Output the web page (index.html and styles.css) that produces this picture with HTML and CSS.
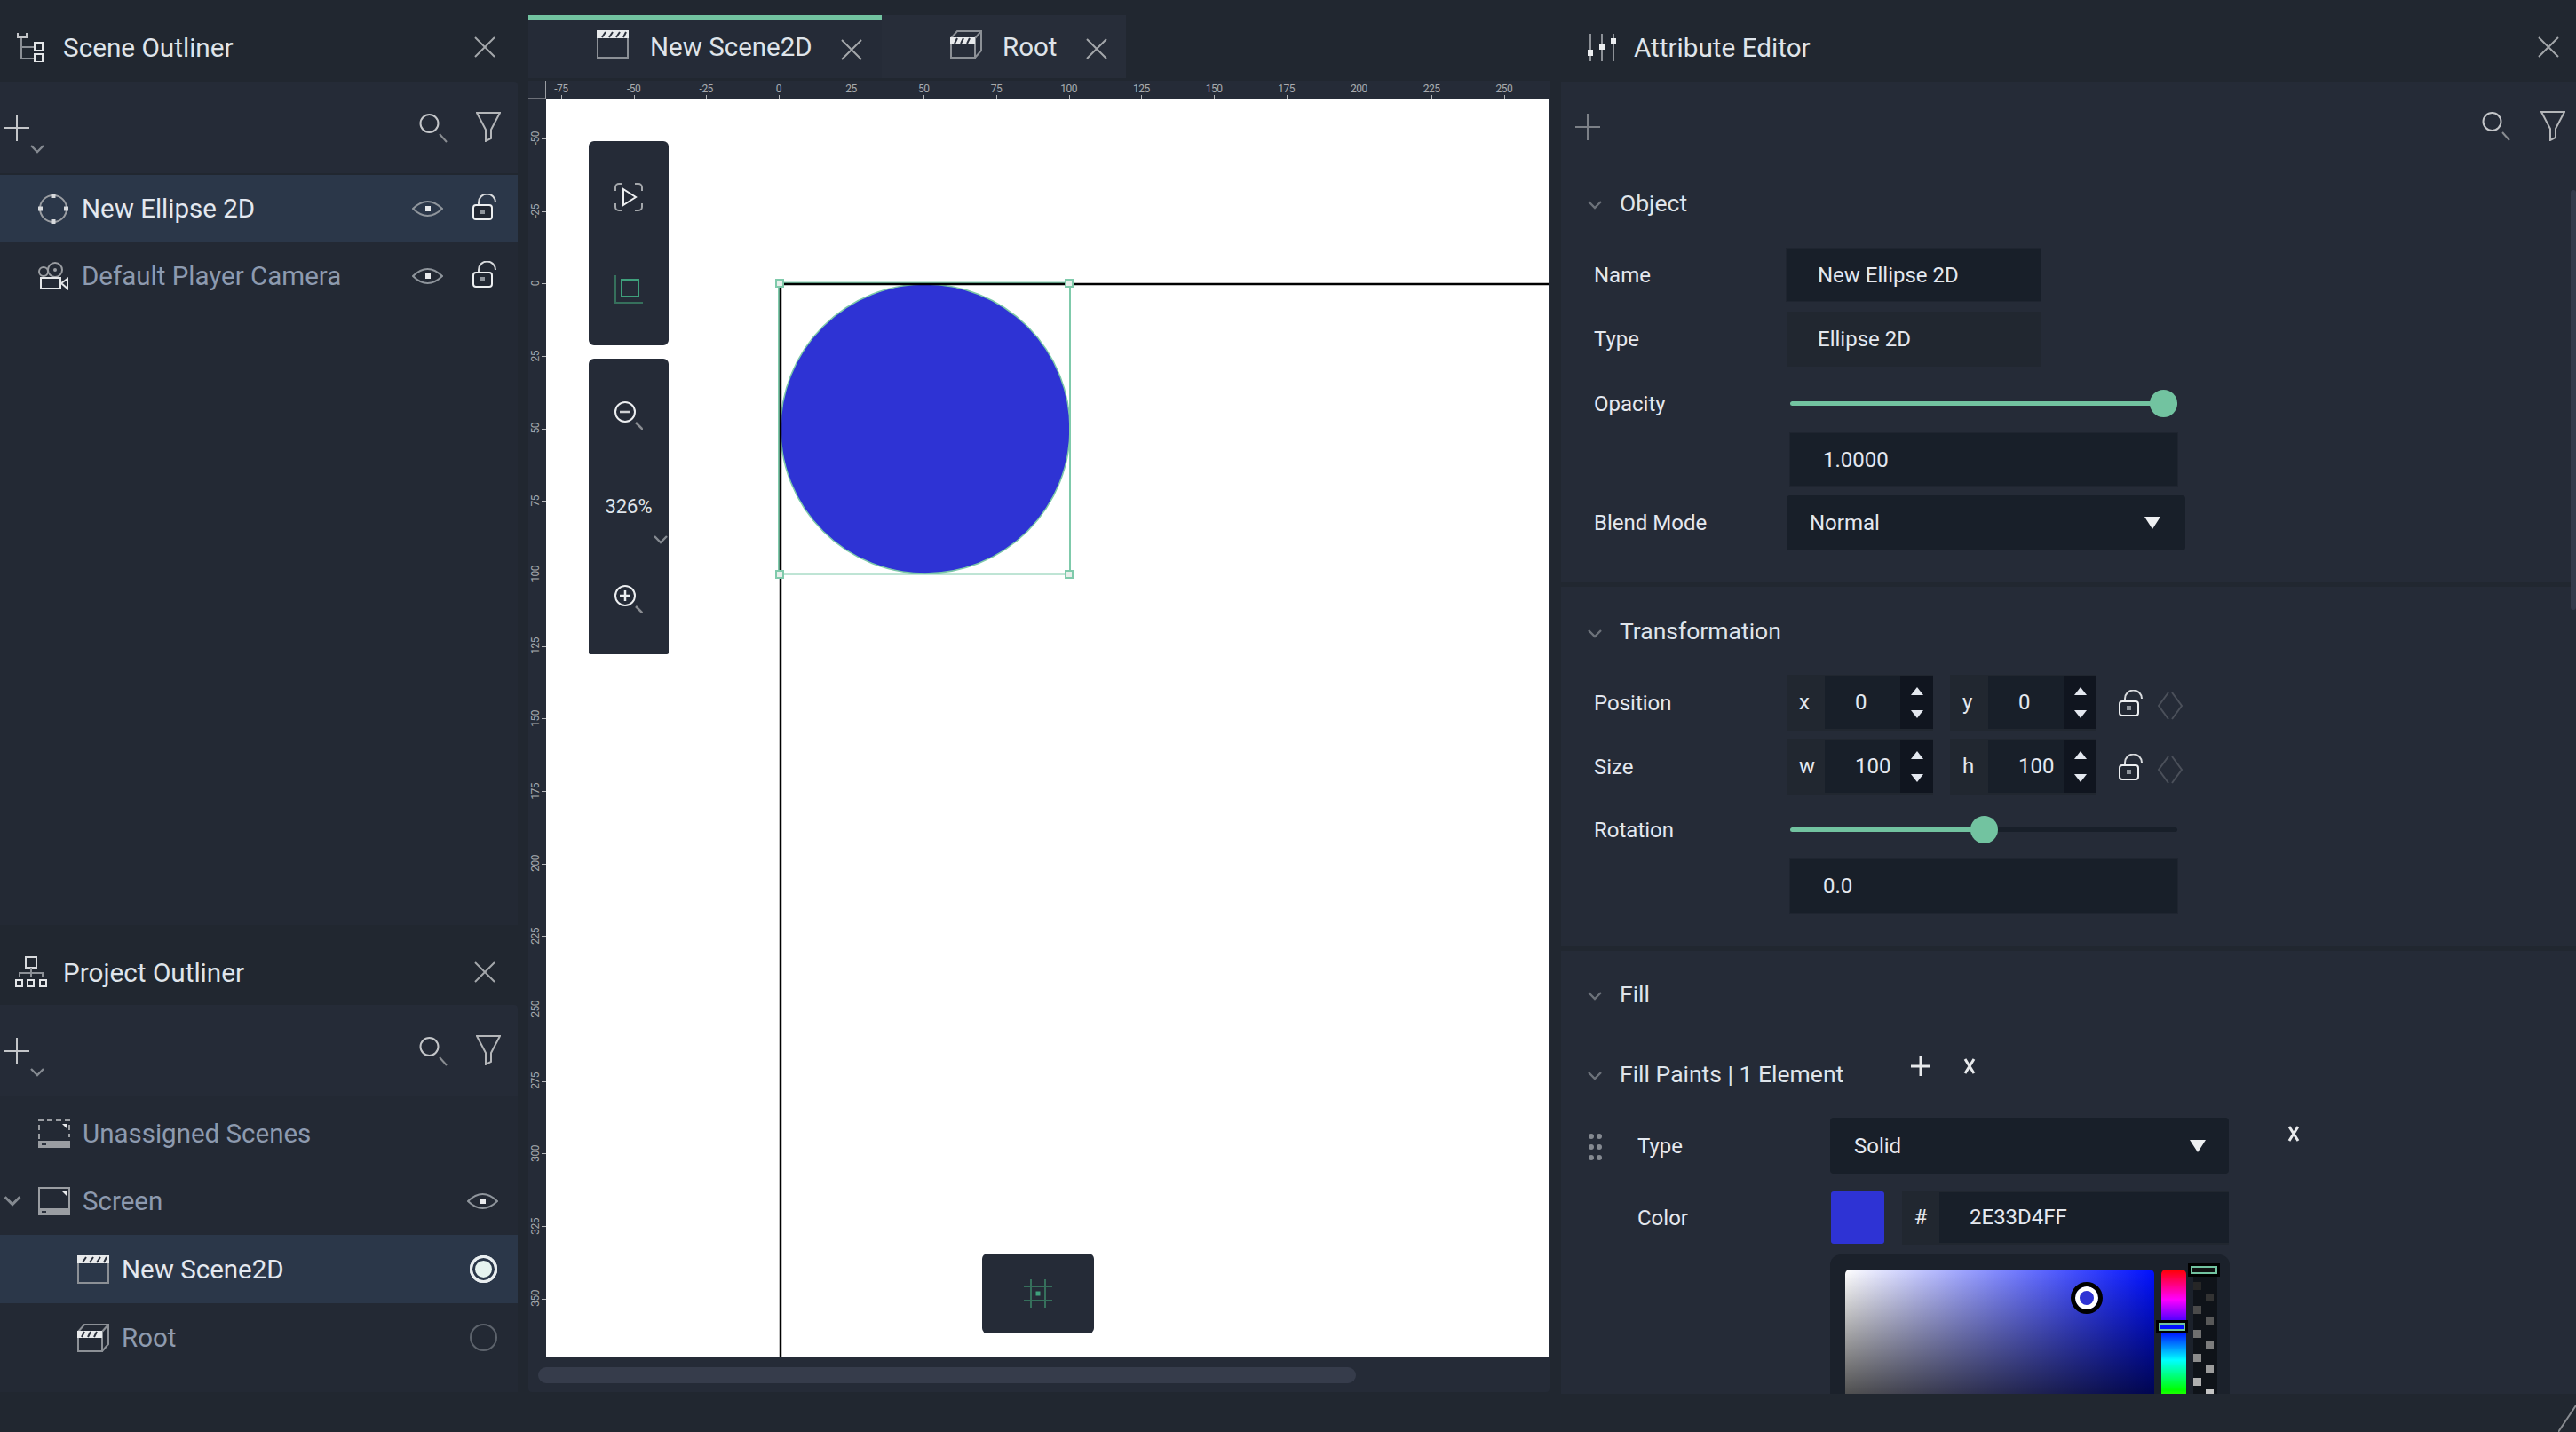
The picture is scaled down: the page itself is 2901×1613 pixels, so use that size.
FILE: index.html
```html
<!DOCTYPE html>
<html lang="en">
<head>
  <meta charset="UTF-8" />
  <title>Scene Editor</title>
  <link rel="stylesheet" href="styles.css">
</head>
<body>

  <svg class="defs" width="0" height="0">
    <symbol id="i-close" viewBox="0 0 24 24"><path d="M1 1L23 23M23 1L1 23" stroke="#a4a7ab" stroke-width="2" fill="none"/></symbol>
    <symbol id="i-plus" viewBox="0 0 28 30"><path d="M14 0V30M0 15H28" stroke="#c4c6c9" stroke-width="2" fill="none"/></symbol>
    <symbol id="i-chev" viewBox="0 0 16 10"><path d="M1 1L8 8L15 1" stroke="#858a91" stroke-width="2.4" fill="none"/></symbol>
    <symbol id="i-search" viewBox="0 0 32 34"><circle cx="11.5" cy="12" r="10" stroke="#c4c6c9" stroke-width="2" fill="none"/><path d="M23 24L31 33" stroke="#8a8d92" stroke-width="2" fill="none"/></symbol>
    <symbol id="i-filter" viewBox="0 0 28 34"><path d="M1 1H27L17 20V30L11 33V20Z" stroke="#b4b6b9" stroke-width="2" fill="none"/></symbol>
    <symbol id="i-eye" viewBox="0 0 35 20"><path d="M1 10Q17.500 -6 34 10Q17.500 26 1 10Z" stroke="#8f959c" stroke-width="2" fill="none"/><rect x="15" y="7" width="6" height="6" fill="#e8eaec"/></symbol>
    <symbol id="i-lock" viewBox="0 0 28 30"><path d="M7 13V10a9.500 9.500 0 0 1 19 0" stroke="#d8dadd" stroke-width="2" fill="none"/><rect x="1" y="13" width="21" height="16" rx="3" stroke="#eceef0" stroke-width="2" fill="#212732"/><rect x="9" y="18" width="5" height="5" fill="#8f959c"/></symbol>
    <symbol id="i-diamond" viewBox="0 0 30 34"><path d="M13 2L2 17L13 32M17 2L28 17L17 32" stroke="#4b505a" stroke-width="2" fill="none"/></symbol>
    <symbol id="i-scene" viewBox="0 0 36 32"><rect x="1" y="1" width="34" height="30" stroke="#8c9096" stroke-width="2" fill="none"/><rect width="36" height="9" fill="#e8eaec"/><path d="M6 8L10 2M14 8L18 2M22 8L26 2M30 8L33 2" stroke="#2a303c" stroke-width="2"/></symbol>
    <symbol id="i-root" viewBox="0 0 36 32"><path d="M1 9L8 1H35V23L28 31" stroke="#8c9096" stroke-width="2" fill="none"/><path d="M28 9L35 1" stroke="#8c9096" stroke-width="2"/><rect x="1" y="9" width="27" height="22" stroke="#8c9096" stroke-width="2" fill="none"/><rect y="8" width="28" height="8" fill="#e8eaec"/><path d="M5 15L8 9M12 15L15 9M19 15L22 9" stroke="#2a303c" stroke-width="2"/></symbol>
    <symbol id="i-screen" viewBox="0 0 36 32"><rect x="1" y="1" width="34" height="30" stroke="#9a9da2" stroke-width="2" fill="none"/><rect y="24" width="36" height="8" fill="#9a9da2"/><rect x="4" y="27" width="5" height="2" fill="#2a303c"/><path d="M27 5H32V10Z" fill="#e8eaec"/></symbol>
    <symbol id="i-unassigned" viewBox="0 0 36 32"><path d="M1 12V1H35V12M1 16V31H35V16" stroke="#9a9da2" stroke-width="2" stroke-dasharray="6 4" fill="none"/><rect y="24" width="36" height="8" fill="#9a9da2"/><rect x="4" y="27" width="5" height="2" fill="#2a303c"/><path d="M27 5H32V10Z" fill="#e8eaec"/></symbol>
    <symbol id="i-x" viewBox="0 0 14 18"><path d="M2 1L12 17M12 1L2 17" stroke="#e8eaec" stroke-width="3" fill="none"/></symbol>
    <symbol id="i-tree" viewBox="0 0 30 33"><path d="M1 0V5H11V0" stroke="#c4c6c9" stroke-width="2" fill="none"/><path d="M5 6V29H19M5 16H19" stroke="#8c9096" stroke-width="2" fill="none"/><rect x="20" y="11" width="9" height="9" stroke="#e4e6e8" stroke-width="2" fill="none"/><rect x="20" y="24" width="9" height="9" stroke="#e4e6e8" stroke-width="2" fill="none"/></symbol>
  </svg>

  <div class="app">

    <aside class="left">
      <section class="panel scene-panel">
        <header class="panel-head">
          <svg class="head-icon" width="30" height="33"><use href="#i-tree"/></svg>
          <span class="panel-title">Scene Outliner</span>
          <svg class="close" width="24" height="24"><use href="#i-close"/></svg>
        </header>
        <div class="toolbar">
          <span class="add">
            <svg width="28" height="30"><use href="#i-plus"/></svg>
            <svg class="add-chev" width="16" height="10"><use href="#i-chev"/></svg>
          </span>
          <svg class="tool-search" width="32" height="34"><use href="#i-search"/></svg>
          <svg class="tool-filter" width="28" height="34"><use href="#i-filter"/></svg>
        </div>
        <ul class="tree">
          <li class="row selected">
            <svg class="row-icon" width="34" height="34" viewBox="0 0 34 34"><circle cx="17" cy="17" r="15" stroke="#9a9da2" stroke-width="2" fill="none"/><rect x="14.500" y="0" width="5" height="5" fill="#d8dadd"/><rect x="14.500" y="29" width="5" height="5" fill="#d8dadd"/><rect x="0" y="14.500" width="5" height="5" fill="#d8dadd"/><rect x="29" y="14.500" width="5" height="5" fill="#d8dadd"/></svg>
            <span class="row-name">New Ellipse 2D</span>
            <svg class="row-eye" width="35" height="20"><use href="#i-eye"/></svg>
            <svg class="row-lock" width="28" height="30"><use href="#i-lock"/></svg>
          </li>
          <li class="row">
            <svg class="row-icon" width="34" height="32" viewBox="0 0 34 32"><circle cx="6" cy="11" r="5" stroke="#9a9da2" stroke-width="2" fill="none"/><circle cx="19" cy="9" r="8" stroke="#9a9da2" stroke-width="2" fill="none"/><circle cx="19" cy="9" r="2" fill="#9a9da2"/><rect x="3" y="18" width="22" height="12" stroke="#e4e6e8" stroke-width="2" fill="none"/><path d="M26 24L33 19V30Z" stroke="#e4e6e8" stroke-width="2" fill="none"/></svg>
            <span class="row-name">Default Player Camera</span>
            <svg class="row-eye" width="35" height="20"><use href="#i-eye"/></svg>
            <svg class="row-lock" width="28" height="30"><use href="#i-lock"/></svg>
          </li>
        </ul>
      </section>

      <section class="panel project-panel">
        <header class="panel-head project-head">
          <svg class="head-icon" width="36" height="36" viewBox="0 0 36 36"><rect x="12" y="1" width="12" height="12" stroke="#d8dadd" stroke-width="2" fill="none"/><path d="M18 13V24M5 24V19H31V24" stroke="#8c9096" stroke-width="2" fill="none"/><rect x="1" y="27" width="7" height="7" stroke="#e4e6e8" stroke-width="2" fill="none"/><rect x="14" y="27" width="7" height="7" stroke="#e4e6e8" stroke-width="2" fill="none"/><rect x="28" y="27" width="7" height="7" stroke="#e4e6e8" stroke-width="2" fill="none"/></svg>
          <span class="panel-title">Project Outliner</span>
          <svg class="close" width="24" height="24"><use href="#i-close"/></svg>
        </header>
        <div class="toolbar">
          <span class="add">
            <svg width="28" height="30"><use href="#i-plus"/></svg>
            <svg class="add-chev" width="16" height="10"><use href="#i-chev"/></svg>
          </span>
          <svg class="tool-search" width="32" height="34"><use href="#i-search"/></svg>
          <svg class="tool-filter" width="28" height="34"><use href="#i-filter"/></svg>
        </div>
        <ul class="tree project-tree">
          <li class="row">
            <svg class="row-icon" width="36" height="32"><use href="#i-unassigned"/></svg>
            <span class="row-name">Unassigned Scenes</span>
          </li>
          <li class="row">
            <svg class="row-chev" width="20" height="12"><use href="#i-chev"/></svg>
            <svg class="row-icon" width="36" height="32"><use href="#i-screen"/></svg>
            <span class="row-name">Screen</span>
            <svg class="row-eye end" width="35" height="20"><use href="#i-eye"/></svg>
          </li>
          <li class="row selected child">
            <svg class="row-icon" width="36" height="32"><use href="#i-scene"/></svg>
            <span class="row-name">New Scene2D</span>
            <span class="radio on"></span>
          </li>
          <li class="row child">
            <svg class="row-icon" width="36" height="32"><use href="#i-root"/></svg>
            <span class="row-name">Root</span>
            <span class="radio"></span>
          </li>
        </ul>
      </section>
    </aside>

    <main class="center">
      <nav class="tabs">
        <div class="tab active">
          <svg class="tab-icon" width="36" height="32"><use href="#i-scene"/></svg>
          <span class="tab-name">New Scene2D</span>
          <svg class="tab-close" width="24" height="24"><use href="#i-close"/></svg>
        </div>
        <div class="tab second">
          <svg class="tab-icon" width="36" height="32"><use href="#i-root"/></svg>
          <span class="tab-name">Root</span>
          <svg class="tab-close" width="24" height="24"><use href="#i-close"/></svg>
        </div>
      </nav>

      <div class="view">
        <div class="ruler-top">
          <div class="ruler-corner"></div>
          <div class="ticks-h">
            <span>-75</span><span>-50</span><span>-25</span><span>0</span><span>25</span><span>50</span><span>75</span><span>100</span><span>125</span><span>150</span><span>175</span><span>200</span><span>225</span><span>250</span>
          </div>
        </div>
        <div class="view-body">
          <div class="ticks-v">
            <span><b>-50</b></span><span><b>-25</b></span><span><b>0</b></span><span><b>25</b></span><span><b>50</b></span><span><b>75</b></span><span><b>100</b></span><span><b>125</b></span><span><b>150</b></span><span><b>175</b></span><span><b>200</b></span><span><b>225</b></span><span><b>250</b></span><span><b>275</b></span><span><b>300</b></span><span><b>325</b></span><span><b>350</b></span>
          </div>
          <div class="canvas">
            <svg class="stage" width="1129" height="1417" viewBox="0 0 1129 1417">
              <circle cx="427" cy="371" r="163" fill="#2e33d4" stroke="#7cc8a8" stroke-width="1.500"/>
              <rect x="262" y="206.500" width="328" height="328" fill="none" stroke="#7fcaab" stroke-width="2"/>
              <path d="M264 1417V208H1129" stroke="#000" stroke-width="2.500" fill="none"/>
              <rect x="259" y="203" width="8" height="8" fill="#e8efeb" stroke="#7fcaab" stroke-width="2"/>
              <rect x="585" y="203" width="8" height="8" fill="#e8efeb" stroke="#7fcaab" stroke-width="2"/>
              <rect x="259" y="531" width="8" height="8" fill="#e8efeb" stroke="#7fcaab" stroke-width="2"/>
              <rect x="585" y="531" width="8" height="8" fill="#e8efeb" stroke="#7fcaab" stroke-width="2"/>
            </svg>

            <div class="float-bar view-tools">
              <svg width="32" height="32" viewBox="0 0 32 32"><path d="M1 9V5a4 4 0 0 1 4-4H9M23 1H27a4 4 0 0 1 4 4V9M31 23V27a4 4 0 0 1-4 4H23M9 31H5a4 4 0 0 1-4-4V23" stroke="#a4a7ab" stroke-width="2" fill="none"/><path d="M10 7L24 16L10 25Z" stroke="#eceef0" stroke-width="2" fill="none"/></svg>
              <svg width="32" height="32" viewBox="0 0 32 32"><path d="M1 0V31H32" stroke="#36705c" stroke-width="2" fill="none"/><rect x="8" y="5" width="19" height="19" stroke="#3fa07c" stroke-width="2" fill="none"/></svg>
            </div>

            <div class="float-bar zoom-tools">
              <svg width="32" height="32" viewBox="0 0 32 32"><circle cx="12" cy="12" r="11" stroke="#eceef0" stroke-width="2" fill="none"/><path d="M6 12H18" stroke="#d0d2d5" stroke-width="2.500"/><path d="M24 24L32 32" stroke="#8a8d92" stroke-width="2.500"/></svg>
              <span class="zoom-value">326%</span>
              <svg class="zoom-in" width="32" height="32" viewBox="0 0 32 32"><circle cx="12" cy="12" r="11" stroke="#eceef0" stroke-width="2" fill="none"/><path d="M6 12H18M12 6V18" stroke="#eceef0" stroke-width="2.500"/><path d="M24 24L32 32" stroke="#8a8d92" stroke-width="2.500"/></svg>
              <svg class="zoom-chev" width="16" height="10"><use href="#i-chev"/></svg>
            </div>

            <div class="float-bar grid-tool">
              <svg width="32" height="32" viewBox="0 0 32 32"><path d="M8 0V32M24 0V32M0 8H32M0 24H32" stroke="#36705c" stroke-width="2" fill="none"/><rect x="13.500" y="13.500" width="5" height="5" fill="#3fa07c"/></svg>
            </div>
          </div>
        </div>
        <div class="h-scroll"><div class="h-thumb"></div></div>
      </div>
    </main>

    <aside class="right">
      <header class="panel-head attr-head">
        <svg class="head-icon" width="32" height="31" viewBox="0 0 32 31"><path d="M3 0V31M16 0V31M29 0V31" stroke="#8c9096" stroke-width="2" fill="none"/><rect x="0" y="18" width="6" height="7" fill="#eceef0"/><rect x="13" y="12" width="6" height="6" fill="#eceef0"/><rect x="26" y="5" width="6" height="7" fill="#eceef0"/></svg>
        <span class="panel-title">Attribute Editor</span>
        <svg class="close" width="24" height="24"><use href="#i-close"/></svg>
      </header>
      <div class="toolbar attr-toolbar">
        <span class="add dim"><svg width="28" height="30"><use href="#i-plus"/></svg></span>
        <svg class="tool-search" width="32" height="34"><use href="#i-search"/></svg>
        <svg class="tool-filter" width="28" height="34"><use href="#i-filter"/></svg>
      </div>

      <div class="attrs">
        <div class="v-thumb"></div>

        <section class="group object-group">
          <h3 class="group-title"><svg class="group-chev" width="16" height="10"><use href="#i-chev"/></svg>Object</h3>
          <div class="attr name-row">
            <label>Name</label>
            <div class="value strong">New Ellipse 2D</div>
          </div>
          <div class="attr type-row">
            <label>Type</label>
            <div class="value plain">Ellipse 2D</div>
          </div>
          <div class="attr slider-row">
            <label>Opacity</label>
            <div class="slider"><div class="slider-fill full"></div><div class="knob"></div></div>
          </div>
          <div class="attr wide-row">
            <label></label>
            <div class="value wide">1.0000</div>
          </div>
          <div class="attr blend-row">
            <label>Blend Mode</label>
            <div class="select blend">Normal<i class="caret"></i></div>
          </div>
        </section>

        <section class="group transform-group">
          <h3 class="group-title"><svg class="group-chev" width="16" height="10"><use href="#i-chev"/></svg>Transformation</h3>
          <div class="attr pair-row">
            <label>Position</label>
            <div class="num"><span class="axis">x</span><span class="num-val">0</span><span class="step"><i class="up"></i><i class="down"></i></span></div>
            <div class="num"><span class="axis">y</span><span class="num-val">0</span><span class="step"><i class="up"></i><i class="down"></i></span></div>
            <svg class="pair-lock" width="28" height="30"><use href="#i-lock"/></svg>
            <svg class="pair-key" width="30" height="34"><use href="#i-diamond"/></svg>
          </div>
          <div class="attr pair-row size-row">
            <label>Size</label>
            <div class="num"><span class="axis">w</span><span class="num-val">100</span><span class="step"><i class="up"></i><i class="down"></i></span></div>
            <div class="num"><span class="axis">h</span><span class="num-val">100</span><span class="step"><i class="up"></i><i class="down"></i></span></div>
            <svg class="pair-lock" width="28" height="30"><use href="#i-lock"/></svg>
            <svg class="pair-key" width="30" height="34"><use href="#i-diamond"/></svg>
          </div>
          <div class="attr slider-row rotation-row">
            <label>Rotation</label>
            <div class="slider"><div class="slider-fill half"></div><div class="knob"></div></div>
          </div>
          <div class="attr wide-row rotation-input">
            <label></label>
            <div class="value wide">0.0</div>
          </div>
        </section>

        <section class="group fill-group">
          <h3 class="group-title"><svg class="group-chev" width="16" height="10"><use href="#i-chev"/></svg>Fill</h3>
          <h3 class="group-title paints-title">
            <svg class="group-chev" width="16" height="10"><use href="#i-chev"/></svg>Fill Paints | 1 Element
            <svg class="paint-add" width="22" height="22" viewBox="0 0 22 22"><path d="M11 0V22M0 11H22" stroke="#e8eaec" stroke-width="3"/></svg>
            <svg class="paint-del" width="14" height="18"><use href="#i-x"/></svg>
          </h3>
          <div class="paint-row">
            <span class="grip"><i></i><i></i><i></i><i></i><i></i><i></i></span>
            <label>Type</label>
            <div class="select paint-type">Solid<i class="caret"></i></div>
            <svg class="paint-remove" width="14" height="18"><use href="#i-x"/></svg>
          </div>
          <div class="paint-row color-row">
            <span class="grip-space"></span>
            <label>Color</label>
            <span class="swatch"></span>
            <div class="hex"><span class="hash">#</span><span class="hex-val">2E33D4FF</span></div>
          </div>
          <div class="picker">
            <div class="sat-val"></div>
            <div class="hue"></div>
            <svg class="alpha" width="27" height="140" viewBox="0 0 27 140">
              <rect x="0" y="14" width="9" height="9" fill="#262626"/><rect x="14" y="27" width="9" height="9" fill="#333"/>
              <rect x="0" y="41" width="9" height="9" fill="#4a4a4a"/><rect x="14" y="54" width="9" height="9" fill="#595959"/>
              <rect x="0" y="68" width="9" height="9" fill="#707070"/><rect x="14" y="81" width="9" height="9" fill="#7c7c7c"/>
              <rect x="0" y="95" width="9" height="9" fill="#8c8c8c"/><rect x="14" y="108" width="9" height="9" fill="#9c9c9c"/>
              <rect x="0" y="122" width="9" height="9" fill="#b0b0b0"/><rect x="14" y="135" width="9" height="5" fill="#c4c4c4"/>
            </svg>
            <span class="sv-knob"></span>
            <span class="hue-handle"></span>
            <span class="alpha-handle"></span>
          </div>
        </section>
      </div>
    </aside>
  </div>

  <footer class="status">
    <svg width="20" height="30" viewBox="0 0 20 30"><path d="M0 30L20 0" stroke="#8a8d92" stroke-width="2"/></svg>
  </footer>

</body>
</html>
```

FILE: styles.css
```css
* {
  box-sizing: border-box;
}

html, body {
  margin: 0;
  height: 100%;
}

body {
  background: #212730;
  color: #e4e8ef;
  font-family: Roboto, "Liberation Sans", sans-serif;
  overflow: hidden;
}

.defs {
  position: absolute;
}

svg {
  display: block;
  flex: none;
}

.app {
  display: flex;
  height: 1570px;
}

/* side panels */
.left {
  width: 583px;
  flex: none;
  display: flex;
  flex-direction: column;
}

.panel-head {
  height: 92px;
  display: flex;
  align-items: center;
  padding-right: 25px;
  padding-top: 14px;
  flex: none;
}

.panel-title {
  font-size: 29.700px;
  color: #dfe4ea;
  flex: 1;
  margin-left: 22px;
}

.head-icon {
  margin-left: 19px;
}

.toolbar {
  height: 103px;
  background: #252b37;
  display: flex;
  align-items: center;
  flex: none;
  border-radius: 0 4px 0 0;
}

.add {
  display: block;
  position: relative;
  margin-left: 5px;
  margin-right: auto;
}

.add-chev {
  position: absolute;
  left: 29px;
  top: 34px;
}

.tool-search {
  margin-right: 32px;
}

.tool-filter {
  margin-right: 19px;
  margin-top: -2px;
}

.tree {
  list-style: none;
  margin: 2px 0 0;
  padding: 0;
  background: #232934;
  flex: 1;
}

.row {
  height: 76px;
  display: flex;
  align-items: center;
  padding-left: 43px;
  font-size: 29.500px;
  color: #8d9aaf;
}

.row.selected {
  background: #2b3749;
  color: #e4e8ef;
}

.row.child {
  padding-left: 87px;
}

.row-name {
  margin-left: 15px;
  flex: 1;
  white-space: nowrap;
}

.project-tree .row-name {
  margin-left: 14px;
}

.row-eye {
  margin-right: 33px;
}

.row-lock {
  margin-right: 23px;
  margin-top: -4px;
}

.row-eye.end {
  margin-right: 22px;
}

.row-chev {
  margin-left: -39px;
  margin-right: 19px;
}

.radio {
  width: 31px;
  height: 31px;
  border-radius: 50%;
  border: 2px solid #5d636c;
  margin-right: 23px;
  flex: none;
}

.radio.on {
  background: #e6f3ef;
  border: none;
  outline: 3px solid #e9eef0;
  outline-offset: -3px;
  box-shadow: inset 0 0 0 3px #e9eef0, inset 0 0 0 6px #2b3749;
}

.scene-panel {
  height: 1042px;
  display: flex;
  flex-direction: column;
}

.project-panel {
  height: 526px;
  display: flex;
  flex-direction: column;
}

.project-head {
  height: 90px;
  padding-top: 16px;
}

.project-head .head-icon {
  margin-left: 17px;
}

.project-head .panel-title {
  margin-left: 18px;
}

.project-panel .tree {
  margin-top: 0;
  padding-top: 3px;
}

.project-panel .row {
  height: 77px;
}

.project-tree .row:nth-child(2) {
  height: 76px;
}

/* centre */
.center {
  width: 1162px;
  flex: none;
  height: 1568px;
  padding: 17px 0 0 12px;
  display: flex;
  flex-direction: column;
}

.tabs {
  height: 71px;
  display: flex;
  flex: none;
}

.tab {
  display: flex;
  align-items: center;
  background: #252b37;
  font-size: 29.500px;
  color: #dfe4ea;
  width: 398px;
  padding-left: 77px;
}

.tab.active {
  border-top: 6px solid #72c3a0;
  padding-bottom: 5px;
}

.tab.second {
  width: 275px;
  background: #272d39;
}

.tab-icon {
  margin-top: -6px;
}

.tab-name {
  margin-left: 24px;
  white-space: nowrap;
}

.second .tab-name {
  margin-left: 23px;
}

.tab-close {
  margin-left: 32px;
  margin-top: 5px;
}

.second .tab-close {
  margin-left: 33px;
}

.view {
  margin-top: 3px;
  height: 1477px;
  background: #252b37;
  width: 1150px;
  display: flex;
  flex-direction: column;
  border-radius: 0 0 4px 4px;
  overflow: hidden;
}

.ruler-top {
  height: 21px;
  display: flex;
  flex: none;
}

.ruler-corner {
  width: 20px;
  flex: none;
  border-right: 1px solid #9a9da2;
  border-bottom: 2px solid #6d7078;
}

.ticks-h {
  display: flex;
  margin-left: -24px;
}

.ticks-h span {
  width: 81.700px;
  flex: none;
  height: 21px;
  text-align: center;
  font-size: 12px;
  line-height: 18px;
  color: #a8abb0;
  position: relative;
  letter-spacing: -0.5px;
}

.ticks-h span::after {
  content: "";
  position: absolute;
  left: 50%;
  bottom: 0;
  width: 1px;
  height: 5px;
  background: #b4b6b9;
}

.view-body {
  height: 1417px;
  display: flex;
  flex: none;
}

.ticks-v {
  width: 20px;
  flex: none;
  padding-top: 3px;
  overflow: hidden;
}

.ticks-v span {
  display: flex;
  height: 81.700px;
  align-items: center;
  position: relative;
  padding-left: 3px;
}

.ticks-v b {
  font-weight: 400;
  font-size: 12px;
  line-height: 10px;
  width: 10px;
  writing-mode: vertical-rl;
  transform: rotate(180deg);
  color: #a8abb0;
  letter-spacing: -0.5px;
}

.ticks-v span::after {
  content: "";
  position: absolute;
  right: 0;
  top: 50%;
  width: 5px;
  height: 1px;
  background: #b4b6b9;
}

.canvas {
  width: 1129px;
  height: 1417px;
  background: #fff;
  position: relative;
  overflow: hidden;
}

.stage {
  position: absolute;
  left: 0;
  top: 0;
}

.float-bar {
  position: absolute;
  background: #252b37;
  border-radius: 6px;
  display: flex;
  flex-direction: column;
  align-items: center;
}

.view-tools {
  left: 48px;
  top: 47px;
  width: 90px;
  height: 230px;
  justify-content: center;
  gap: 72px;
}

.zoom-tools {
  left: 48px;
  top: 292px;
  width: 90px;
  height: 333px;
  padding-top: 48px;
  border-radius: 6px 6px 2px 2px;
}

.zoom-value {
  font-size: 22px;
  line-height: 26px;
  margin-top: 74px;
  color: #dfe4ea;
}

.zoom-in {
  margin-top: 75px;
}

.zoom-chev {
  position: absolute;
  right: 1px;
  top: 199px;
}

.grid-tool {
  left: 491px;
  top: 1300px;
  width: 126px;
  height: 90px;
  justify-content: center;
}

.h-scroll {
  flex: 1;
  padding: 11px 0 0 11px;
}

.h-thumb {
  width: 921px;
  height: 18px;
  border-radius: 9px;
  background: #363c4b;
}

/* attribute editor */
.right {
  flex: 1;
  min-width: 0;
  display: flex;
  flex-direction: column;
}

.attr-head {
  padding-top: 14px;
  padding-right: 19px;
}

.attr-head .head-icon {
  margin-left: 43px;
}

.attr-head .panel-title {
  margin-left: 20px;
}

.attr-toolbar {
  height: 101px;
  margin-left: 13px;
  border-radius: 0;
}

.attr-toolbar .add {
  margin-left: 16px;
  opacity: 0.55;
}

.attr-toolbar .tool-search {
  margin-right: 34px;
  margin-top: -2px;
}

.attr-toolbar .tool-filter {
  margin-right: 12px;
  margin-top: -2px;
}

.attrs {
  flex: 1;
  min-height: 0;
  margin-left: 13px;
  overflow: hidden;
  position: relative;
  background: #212730;
}

.v-thumb {
  position: absolute;
  right: 0;
  top: 21px;
  width: 6px;
  height: 473px;
  background: #343b4b;
  border-radius: 3px;
}

.group {
  background: #252b37;
  padding-left: 30px;
  margin-bottom: 5px;
}

.object-group {
  height: 463px;
  padding-top: 1px;
}

.transform-group {
  height: 405px;
}

.fill-group {
  height: 600px;
  padding-top: 14px;
}

.group-title {
  display: flex;
  align-items: center;
  margin: 0;
  font-size: 26.500px;
  font-weight: 400;
  color: #dfe4ea;
  height: 68px;
}

.group-chev {
  margin-right: 20px;
  margin-top: 6px;
  opacity: 0.75;
}

.transform-group .group-title {
  height: 99px;
}

.attr {
  display: flex;
  align-items: center;
  font-size: 24px;
  color: #e4e8ef;
}

.attr label {
  width: 224px;
  flex: none;
  padding-left: 7px;
}

.value {
  background: #181f29;
  color: #e4e8ef;
  display: flex;
  align-items: center;
}

.name-row {
  margin-top: 18px;
}

.strong {
  width: 286px;
  height: 59px;
  padding-left: 35px;
  box-shadow: 0 0 0 1px #1f2530;
}

.type-row {
  margin-top: 12px;
}

.plain {
  width: 287px;
  height: 62px;
  padding-left: 35px;
  background: #212730;
}

.slider-row {
  margin-top: 26px;
  height: 31px;
}

.slider {
  width: 436px;
  height: 5px;
  margin-left: 4px;
  background: #181f29;
  border-radius: 3px;
  position: relative;
}

.slider-fill {
  height: 5px;
  background: #72c3a0;
  border-radius: 3px;
}

.slider-fill.full {
  width: 100%;
}

.slider-fill.half {
  width: 50%;
}

.knob {
  position: absolute;
  width: 31px;
  height: 31px;
  border-radius: 50%;
  background: #72c3a0;
  top: -13px;
}

.full + .knob {
  right: 0;
}

.half + .knob {
  left: 203px;
}

.wide-row {
  margin-top: 18px;
}

.wide {
  width: 436px;
  height: 59px;
  margin-left: 4px;
  padding-left: 37px;
  box-shadow: 0 0 0 1px #1f2530;
}

.blend-row {
  margin-top: 11px;
}

.select {
  background: #181f29;
  display: flex;
  align-items: center;
  justify-content: space-between;
  border-radius: 4px;
  height: 62px;
}

.blend {
  width: 449px;
  padding: 0 28px 0 26px;
}

.caret {
  width: 0;
  height: 0;
  border-left: 9px solid transparent;
  border-right: 9px solid transparent;
  border-top: 14px solid #eef0f2;
}

.pair-row {
  gap: 19px;
}

.pair-row label {
  margin-right: -19px;
}

.size-row {
  margin-top: 9px;
}

.num {
  display: flex;
  width: 165px;
  height: 63px;
  background: #212730;
  padding: 2px 1px;
}

.axis {
  width: 42px;
  text-align: left;
  padding-left: 13px;
  line-height: 59px;
  flex: none;
}

.num-val {
  width: 85px;
  background: #181f29;
  padding-left: 34px;
  line-height: 59px;
  flex: none;
}

.step {
  width: 37px;
  background: #10151f;
  display: flex;
  flex-direction: column;
  justify-content: space-between;
  align-items: center;
  padding: 12px 0;
  flex: none;
}

.step i {
  width: 0;
  height: 0;
  border-left: 7px solid transparent;
  border-right: 7px solid transparent;
}

.step .up {
  border-bottom: 9px solid #e4e8ef;
}

.step .down {
  border-top: 9px solid #e4e8ef;
}

.pair-lock {
  margin-left: 6px;
}

.pair-key {
  margin-left: -4px;
  margin-top: 6px;
}

.rotation-row {
  margin-top: 24px;
}

.rotation-input .wide {
  height: 60px;
}

.paints-title {
  margin-top: 22px;
  position: relative;
}

.paint-add {
  position: absolute;
  left: 364px;
  top: 15px;
}

.paint-del {
  position: absolute;
  left: 423px;
  top: 17px;
}

.paint-row {
  display: flex;
  align-items: center;
  font-size: 24px;
  margin-top: 16px;
  height: 63px;
  position: relative;
}

.paint-row label {
  width: 217px;
  flex: none;
}

.grip {
  display: grid;
  grid-template-columns: 6px 6px;
  gap: 6px 3px;
  width: 55px;
  margin-top: 2px;
  margin-left: 1px;
}

.grip i {
  width: 6px;
  height: 6px;
  border-radius: 50%;
  background: #858a91;
}

.grip-space {
  width: 56px;
  flex: none;
}

.paint-type {
  width: 449px;
  height: 63px;
  padding: 0 26px 0 27px;
}

.paint-remove {
  position: absolute;
  left: 788px;
  top: 9px;
}

.color-row {
  margin-top: 19px;
  height: 61px;
}

.swatch {
  width: 60px;
  height: 59px;
  background: #2e33d4;
  border-radius: 3px;
  margin-left: 1px;
}

.hex {
  display: flex;
  width: 368px;
  height: 61px;
  margin-left: 20px;
  background: #212730;
  padding-top: 2px;
}

.hash {
  width: 42px;
  text-align: center;
  line-height: 57px;
}

.hex-val {
  flex: 1;
  background: #181f29;
  padding-left: 34px;
  line-height: 57px;
  margin-bottom: 2px;
}

.picker {
  position: relative;
  margin: 11px 0 0 273px;
  width: 450px;
  height: 300px;
  background: #1b212b;
  border-radius: 12px;
}

.sat-val {
  position: absolute;
  left: 17px;
  top: 17px;
  width: 348px;
  height: 204px;
  border-radius: 5px;
  background:
    linear-gradient(to bottom, rgba(0,0,0,0), #000),
    linear-gradient(to right, #fff, #0010ff);
}

.hue {
  position: absolute;
  left: 373px;
  top: 17px;
  width: 28px;
  height: 204px;
  border-radius: 5px;
  background: linear-gradient(to bottom, #ff0000, #ff00ff 16.6%, #0000ff 33.3%, #00ffff 50%, #00ff00 66.6%, #ffff00 83.3%, #ff0000);
}

.alpha {
  position: absolute;
  left: 409px;
  top: 17px;
  background: #0f1319;
}

.sv-knob {
  position: absolute;
  left: 271px;
  top: 31px;
  width: 36px;
  height: 36px;
  border-radius: 50%;
  background: #2e33d4;
  border: 5px solid #000;
  box-shadow: inset 0 0 0 5px #fff;
}

.hue-handle {
  position: absolute;
  left: 367px;
  top: 74px;
  width: 36px;
  height: 15px;
  background: #0010ff;
  border: 4px solid #000;
  outline: 2px solid #72c3a0;
  outline-offset: -5px;
}

.alpha-handle {
  position: absolute;
  left: 403px;
  top: 10px;
  width: 36px;
  height: 15px;
  background: #111;
  border: 4px solid #000;
  outline: 2px solid #72c3a0;
  outline-offset: -5px;
}

.status {
  height: 43px;
  display: flex;
  justify-content: flex-end;
  align-items: flex-end;
}
```
